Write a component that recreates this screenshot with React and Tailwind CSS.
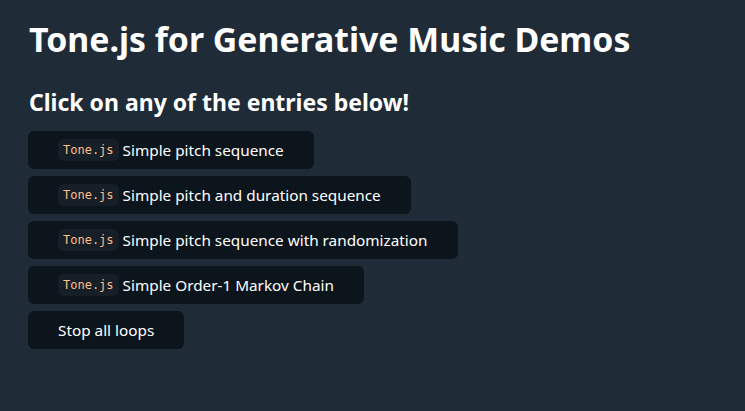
import React from 'react';

const entries = [
  'Simple pitch sequence',
  'Simple pitch and duration sequence',
  'Simple pitch sequence with randomization',
  'Simple Order-1 Markov Chain',
];

const Btn = ({ children }) => (
  <button className="self-start h-[38px] px-[30px] rounded-[6px] bg-[#0c151c] text-white text-[15.3px] flex items-center">
    {children}
  </button>
);

export default function App() {
  return (
    <div className="min-h-[411px] bg-[#202b38] pl-[29px] pt-[17px] text-[#dbdbdb]" style={{ fontFamily: '"Noto Sans", sans-serif' }}>
      <h1 className="text-[33.8px] font-bold text-white leading-[44px]">Tone.js for Generative Music Demos</h1>
      <h2 className="mt-[26px] text-[23px] font-bold text-white leading-[30px]">Click on any of the entries below!</h2>
      <div className="mt-[14px] flex flex-col gap-[7px] -ml-px">
        {entries.map((e) => (
          <Btn key={e}>
            <code className="mr-[4px] px-[5px] py-[2px] rounded-[6px] bg-[#161f27] text-[#ffbe85] text-[12px] font-['DejaVu_Sans_Mono',monospace]">Tone.js</code>
            {e}
          </Btn>
        ))}
        <Btn>Stop all loops</Btn>
      </div>
    </div>
  );
}
